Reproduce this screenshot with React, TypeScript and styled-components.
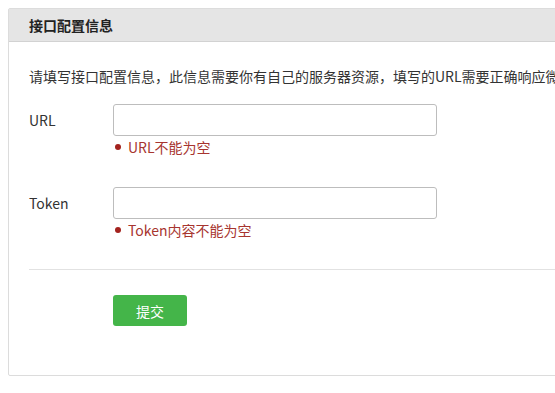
import styled, { createGlobalStyle } from 'styled-components';

const GlobalStyle = createGlobalStyle`
  html {
    overflow: hidden;
  }
  body {
    margin: 8px 0 8px 8px;
    background: #ffffff;
    overflow: hidden;
    font-family: "Noto Sans CJK SC", "Open Sans", sans-serif;
    color: #333333;
  }
`;

const Panel = styled.div`
  width: 720px;
  border: 1px solid #dcdcdc;
  border-radius: 2px;
  background: #ffffff;
`;

const PanelHeader = styled.div`
  height: 32px;
  line-height: 32px;
  padding-left: 20px;
  background: #e5e5e5;
  border-bottom: 1px solid #d2d2d2;
  font-size: 14px;
  font-weight: bold;
  color: #222222;
`;

const PanelBody = styled.div`
  padding: 24px 0 49px 20px;
`;

const Desc = styled.p`
  margin: 0;
  font-size: 14px;
  line-height: 20px;
  white-space: nowrap;
  color: #333333;
`;

const Form = styled.div`
  margin-top: 18px;
  display: flex;
  flex-direction: column;
  gap: 30px;
`;

const FormRow = styled.div`
  display: flex;
  align-items: flex-start;
`;

const Label = styled.label`
  width: 84px;
  flex: none;
  font-size: 14px;
  line-height: 32px;
  color: #333333;
`;

const Control = styled.div`
  display: flex;
  flex-direction: column;
`;

const Input = styled.input`
  box-sizing: border-box;
  width: 324px;
  height: 32px;
  border: 1px solid #bdbdbd;
  border-radius: 3px;
  padding: 0 8px;
  font-size: 14px;
  outline: none;
  background: #ffffff;
`;

const ErrorTip = styled.div`
  margin-top: 1px;
  display: flex;
  align-items: center;
  gap: 7px;
  padding-left: 2px;
  font-size: 14px;
  line-height: 20px;
  color: #a7352f;
`;

const Dot = styled.span`
  width: 6px;
  height: 6px;
  border-radius: 50%;
  background: #a3221e;
  flex: none;
`;

const Divider = styled.hr`
  margin: 29px 0 25px 0;
  border: 0;
  border-top: 1px solid #e2e2e2;
`;

const Actions = styled.div`
  padding-left: 84px;
`;

const SubmitButton = styled.button`
  width: 74px;
  height: 31px;
  border: 0;
  border-radius: 3px;
  background: #44b549;
  color: #ffffff;
  font-family: "Noto Sans CJK SC", sans-serif;
  font-size: 14px;
  cursor: pointer;
`;

const fields = [
  { label: 'URL', error: 'URL不能为空' },
  { label: 'Token', error: 'Token内容不能为空' },
];

export default function App() {
  return (
    <>
      <GlobalStyle />
      <Panel>
        <PanelHeader>接口配置信息</PanelHeader>
        <PanelBody>
          <Desc>
            请填写接口配置信息，此信息需要你有自己的服务器资源，填写的URL需要正确响应微信发送的Token验证
          </Desc>
          <Form>
            {fields.map((f) => (
              <FormRow key={f.label}>
                <Label>{f.label}</Label>
                <Control>
                  <Input type="text" />
                  <ErrorTip>
                    <Dot />
                    {f.error}
                  </ErrorTip>
                </Control>
              </FormRow>
            ))}
          </Form>
          <Divider />
          <Actions>
            <SubmitButton>提交</SubmitButton>
          </Actions>
        </PanelBody>
      </Panel>
    </>
  );
}
